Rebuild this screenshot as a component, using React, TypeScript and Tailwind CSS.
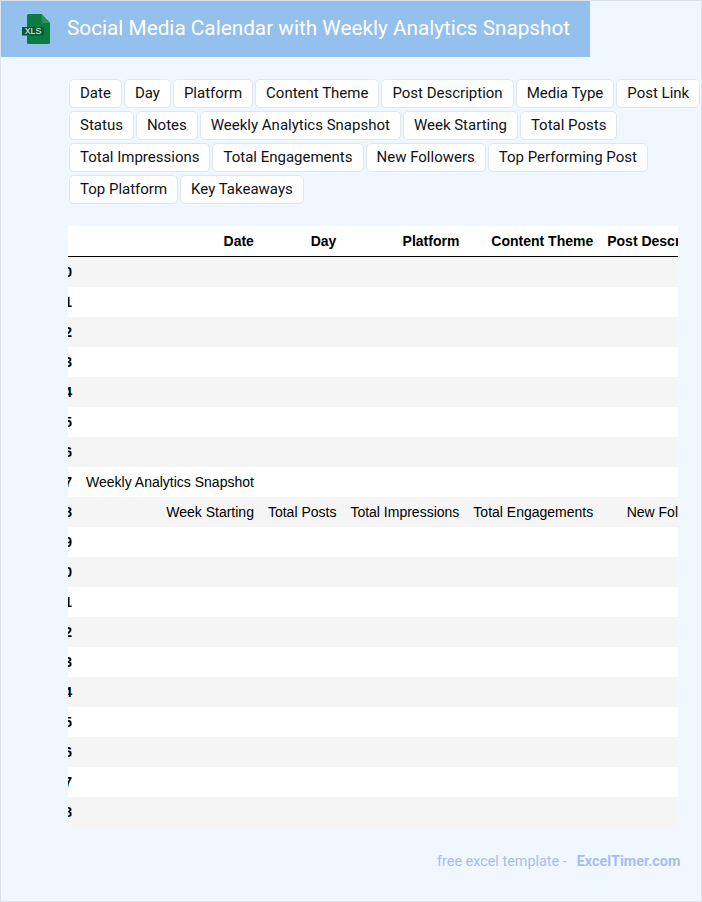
const chips = [
  ["Date", "Day", "Platform", "Content Theme", "Post Description", "Media Type", "Post Link"],
  ["Status", "Notes", "Weekly Analytics Snapshot", "Week Starting", "Total Posts"],
  ["Total Impressions", "Total Engagements", "New Followers", "Top Performing Post"],
  ["Top Platform", "Key Takeaways"],
];
const heads = ["Date", "Day", "Platform", "Content Theme", "Post Description", "Media Type", "Post Link", "Status", "Notes"];
const row8 = ["Week Starting", "Total Posts", "Total Impressions", "Total Engagements", "New Followers", "Top Performing Post", "Top Platform", "Key Takeaways", ""];

export default function App() {
  return (
    <div className="w-[702px] h-[902px] bg-[#f0f7ff] border border-[#d9e3ee] flex flex-col overflow-hidden font-['Roboto',sans-serif]">
      <div className="w-[589px] h-[56px] bg-[#93c0ed] flex items-center shrink-0">
        <svg width="30" height="32" viewBox="0 0 30 32" className="ml-[21px] shrink-0">
          <path d="M5 2.500 a1.500 1.500 0 0 1 1.500 -1.500 H19.500 L28 10 V29.500 a1.500 1.500 0 0 1 -1.500 1.500 H6.500 a1.500 1.500 0 0 1 -1.500 -1.500 Z" fill="#0a7c43" />
          <path d="M19.500 1 L28 10 H21.500 a2 2 0 0 1 -2 -2 Z" fill="#2f8f60" />
          <rect x="0" y="14" width="22" height="8.500" fill="#075a33" />
          <text x="11" y="21.400" textAnchor="middle" fontSize="8.800" fontFamily="'Liberation Sans',sans-serif" fill="#e8f3ec" fontWeight="400">XLS</text>
        </svg>
        <h1 className="ml-[15px] mb-[2px] text-[20.760px] leading-none text-white font-normal whitespace-nowrap">Social Media Calendar with Weekly Analytics Snapshot</h1>
      </div>
      <div className="ml-[68px] mt-[22px] flex flex-col gap-[3px] w-[633px] overflow-hidden shrink-0">
        {chips.map((row, i) => (
          <div key={i} className="flex gap-[2px]">
            {row.map((c) => (
              <span key={c} className="h-[29px] px-[10px] flex items-center bg-white border border-[#dfe6f0] rounded-[5px] text-[15px] text-[#111] whitespace-nowrap">{c}</span>
            ))}
          </div>
        ))}
      </div>
      <div className="ml-[67px] mt-[22px] w-[610px] overflow-hidden shrink-0">
        <table className="ml-[-18.500px] border-separate border-spacing-0 text-[14px] text-black font-['Liberation_Sans',sans-serif] whitespace-nowrap">
          <thead>
            <tr className="bg-white h-[31px]">
              <th className="px-[7px] text-right font-bold border-b border-black"></th>
              {heads.map((h) => (
                <th key={h} className="px-[7px] text-right font-bold border-b border-black">{h}</th>
              ))}
            </tr>
          </thead>
          <tbody>
            {Array.from({ length: 19 }, (_, i) => (
              <tr key={i} className={i % 2 === 0 ? "bg-[#f5f5f5] h-[30px]" : "bg-white h-[30px]"}>
                <th className="px-[7px] text-right font-bold">{i}</th>
                {heads.map((h, j) => (
                  <td key={h} className="px-[7px] text-right">
                    {i === 7 && j === 0 ? "Weekly Analytics Snapshot" : i === 8 ? row8[j] : ""}
                  </td>
                ))}
              </tr>
            ))}
          </tbody>
        </table>
      </div>
      <div className="mt-[25px] ml-[436px] h-[20px] flex items-center text-[14.400px] text-[#a9bdf0] whitespace-nowrap">
        <span>free excel template -</span>
        <span className="ml-[10px] font-bold">ExcelTimer.com</span>
      </div>
    </div>
  );
}
